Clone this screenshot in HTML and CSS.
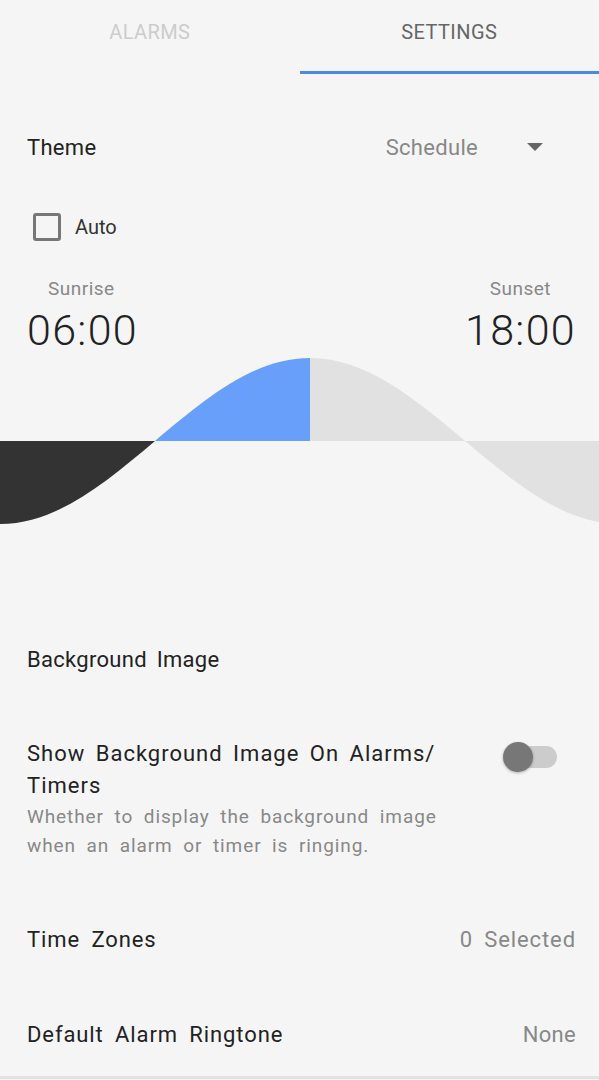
FILE: index.html
```html
<!DOCTYPE html>
<html>
<head>
    <title>Settings</title>
    <link rel="stylesheet" href="styles.css">
</head>
<body>
    <div class="tabs">
        <div class="tab">ALARMS</div>
        <div class="tab active">SETTINGS</div>
    </div>

    <div class="row theme-row">
        <span class="label">Theme</span>
        <div class="dropdown">
            <span class="value">Schedule</span>
            <svg class="arrow" width="16" height="8" viewBox="0 0 16 8"><path d="M0 0 H16 L8 8 Z" fill="#666"/></svg>
        </div>
    </div>

    <div class="auto-row">
        <span class="checkbox"></span>
        <span class="auto-label">Auto</span>
    </div>

    <div class="sun-labels">
        <span>Sunrise</span>
        <span>Sunset</span>
    </div>
    <div class="sun-times">
        <span>06:00</span>
        <span>18:00</span>
    </div>

    <svg class="wave" width="599" height="185" viewBox="0 0 599 185">
        <path d="M155 91 C104.45 133.52 56.09 174 0 174 L0 91 Z" fill="#333"/>
        <path d="M155 91 C205.55 48.48 253.9 8 310 8 L310 91 Z" fill="#679ffa"/>
        <path d="M310 91 L310 8 C366.1 8 414.45 48.48 465 91 Z" fill="#e1e1e1"/>
        <path d="M465 91 C515.55 133.52 563.91 174 620 174 L620 91 Z" fill="#e1e1e1"/>
    </svg>

    <div class="row bg-row">
        <span class="label">Background Image</span>
    </div>

    <div class="row pref-row">
        <div class="pref-text">
            <div class="pref-title">Show Background Image On Alarms/ Timers</div>
            <div class="pref-desc">Whether to display the background image when an alarm or timer is ringing.</div>
        </div>
        <div class="switch"><span class="knob"></span></div>
    </div>

    <div class="row tz-row">
        <span class="label wide">Time Zones</span>
        <span class="value wide">0 Selected</span>
    </div>

    <div class="row ringtone-row">
        <span class="label wide">Default Alarm Ringtone</span>
        <span class="value">None</span>
    </div>

    <div class="bottom-line"></div>
</body>
</html>
```

FILE: styles.css
```css
body { margin: 0; background: #f5f5f5; font-family: Roboto, "Noto Sans", sans-serif; color: #222; width: 599px; overflow: hidden; }
.tabs { display: flex; height: 74px; }
.tab { flex: 1; box-sizing: border-box; height: 74px; line-height: 64px; text-align: center; font-size: 20px; letter-spacing: 0.4px; color: #ccc; border-bottom: 3px solid transparent; }
.tab.active { color: #666; border-bottom-color: #4b8be3; }

.row { display: flex; justify-content: space-between; align-items: center; padding: 0 23px 0 27px; }
.label { font-size: 22px; letter-spacing: 0.3px; word-spacing: 4px; color: #222; }
.value { font-size: 22px; letter-spacing: 0.3px; word-spacing: 4px; color: #888; }
.wide { letter-spacing: 0.9px; word-spacing: 5px; }

.theme-row { margin-top: 50px; height: 46px; }
.dropdown { display: flex; align-items: center; gap: 49px; padding-right: 33px; }
.arrow { display: block; }

.auto-row { display: flex; align-items: center; height: 40px; margin-top: 37px; padding-left: 33px; }
.checkbox { width: 22px; height: 22px; border: 3px solid #777; border-radius: 3px; }
.auto-label { font-size: 20px; margin-left: 14px; color: #333; }

.sun-labels { display: flex; justify-content: space-between; margin-top: 30px; height: 24px; line-height: 24px; padding: 0 48px; font-size: 19px; letter-spacing: 0.5px; color: #888; }
.sun-times { display: flex; justify-content: space-between; height: 40px; line-height: 40px; margin-top: 9px; padding: 0 23px 0 27px; font-size: 43px; font-weight: 300; letter-spacing: 1.3px; color: #222; }
.wave { display: block; }

.bg-row { margin-top: 104px; height: 40px; }

.pref-row { margin-top: 59px; align-items: flex-start; }
.pref-text { width: 440px; }
.pref-title { font-size: 22px; line-height: 32px; letter-spacing: 1px; word-spacing: 4px; }
.pref-desc { font-size: 19px; line-height: 29px; color: #888; letter-spacing: 0.9px; word-spacing: 5px; }
.switch { position: relative; width: 41px; height: 22px; margin-top: 8px; margin-right: 19px; background: #ccc; border-radius: 11px; }
.knob { position: absolute; left: -13px; top: -4px; width: 30px; height: 30px; border-radius: 50%; background: #777; box-shadow: 0 1px 3px rgba(0,0,0,0.3); }

.tz-row { margin-top: 59px; height: 40px; }
.ringtone-row { margin-top: 55px; height: 40px; }
.bottom-line { margin-top: 22px; height: 3px; background: #e2e2e2; }
```
